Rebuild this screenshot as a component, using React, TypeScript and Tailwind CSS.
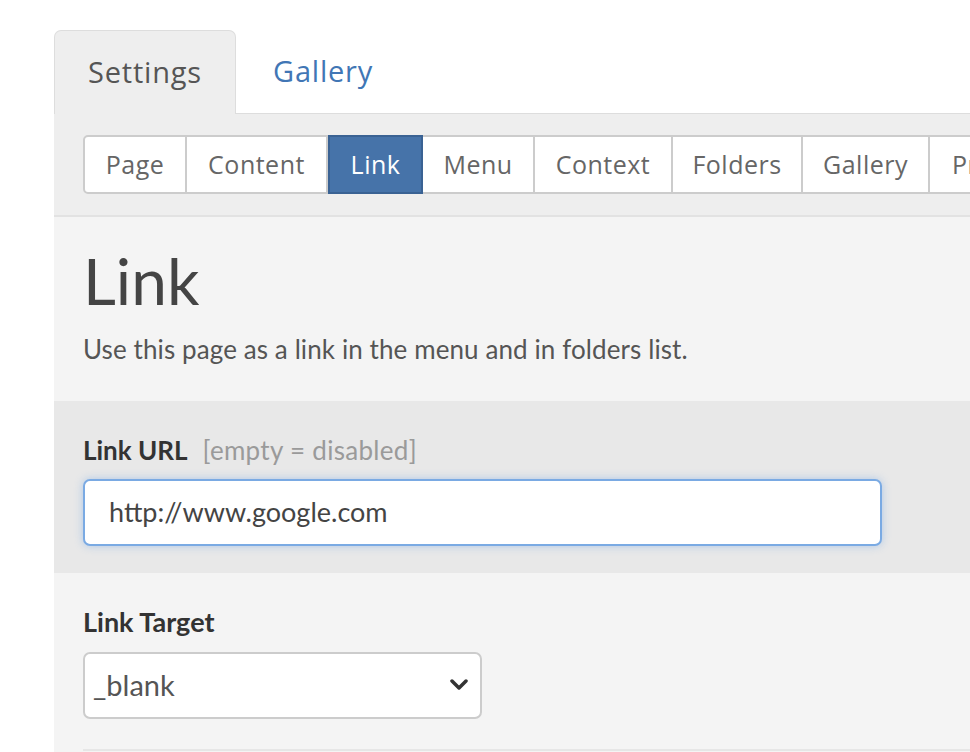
import React from "react";

const mont = { fontFamily: '"Open Sans", "Noto Sans", sans-serif' };
const body = { fontFamily: 'Lato, "Noto Sans", sans-serif' };

const subTabs: { label: string; w: string; active?: boolean }[] = [
  { label: "Page", w: "w-[104px]" },
  { label: "Content", w: "w-[141px]" },
  { label: "Link", w: "w-[95px]", active: true },
  { label: "Menu", w: "w-[112px]" },
  { label: "Context", w: "w-[138px]" },
  { label: "Folders", w: "w-[130px]" },
  { label: "Gallery", w: "w-[127px]" },
];

export default function App() {
  return (
    <div className="w-[970px] h-[752px] overflow-hidden bg-white">
      <div className="ml-[54px] w-[1000px] pt-[30px]">
        {/* top tabs */}
        <div className="flex items-end border-b border-[#dddddd]" style={mont}>
          <div className="-mb-px h-[84px] w-[182px] bg-[#eeeeee] border border-b-0 border-[#dddddd] rounded-t-[7px] flex items-center justify-center pb-[2px] text-[29px] tracking-[0.8px] text-[#555555]">
            Settings
          </div>
          <div className="h-[83px] px-[37px] pb-[2px] flex items-center text-[29px] tracking-[0.8px] text-[#4176b5]">
            Gallery
          </div>
        </div>

        {/* sub tabs */}
        <div className="bg-[#eeeeee] pt-[21px] pb-[21px] pl-[29px] border-b-2 border-[#e2e2e2]">
          <div className="flex" style={mont}>
            {subTabs.map((t, i) => (
              <div
                key={t.label}
                className={
                  t.active
                    ? `${t.w} shrink-0 h-[59px] flex items-center justify-center text-[25px] tracking-[0.5px] bg-[#4673a9] border-2 border-[#3a6293] text-white`
                    : `${t.w} shrink-0 h-[59px] flex items-center justify-center text-[25px] tracking-[0.5px] bg-white border-y-2 border-r-2 border-[#cccccc] text-[#666666] ${i === 0 ? "border-l-2 rounded-l-[5px]" : ""}`
                }
              >
                {t.label}
              </div>
            ))}
            <div className="shrink-0 h-[59px] flex items-center pl-[22px] pr-[22px] text-[25px] tracking-[0.5px] bg-white border-y-2 border-r-2 border-[#cccccc] text-[#666666]">
              Preview
            </div>
          </div>
        </div>

        {/* content */}
        <div className="bg-[#f4f4f4]" style={body}>
          <div className="px-[29px] pt-[28px] pb-[36px]">
            <h1 className="text-[64px] leading-[72px] font-normal text-[#444444]">Link</h1>
            <p className="mt-[16px] text-[26px] leading-[32px] tracking-[0.1px] text-[#555555]">
              Use this page as a link in the menu and in folders list.
            </p>
          </div>

          <div className="bg-[#e8e8e8] px-[29px] pt-[30px] pb-[27px]">
            <div className="flex items-baseline gap-[15px]">
              <span className="text-[26px] font-bold text-[#333333]">Link URL</span>
              <span className="text-[26px] tracking-[0.3px] text-[#9a9a9a]">[empty = disabled]</span>
            </div>
            <div className="mt-[9px] w-[799px] h-[67px] bg-white border-2 border-[#7aaae3] rounded-[7px] shadow-[0_0_8px_rgba(102,160,230,0.45)] flex items-center pl-[24px] text-[27px] text-[#444444]">
              http://www.google.com
            </div>
          </div>

          <div className="px-[29px] pt-[29px] pb-[30px]">
            <div className="text-[27px] font-bold text-[#333333]">Link Target</div>
            <div className="mt-[9px] w-[399px] h-[67px] bg-white border-2 border-[#cccccc] rounded-[7px] flex items-center justify-between pl-[8px] pr-[12px] text-[29px] text-[#555555]">
              <span>_blank</span>
              <svg width="18" height="12" viewBox="0 0 18 12">
                <path d="M2 2 L9 9 L16 2" fill="none" stroke="#333" strokeWidth="3.5" strokeLinecap="round" strokeLinejoin="round" />
              </svg>
            </div>
          </div>
          <div className="mx-[29px] h-[40px] border-t-2 border-[#e6e6e6]" />
        </div>
      </div>
    </div>
  );
}
